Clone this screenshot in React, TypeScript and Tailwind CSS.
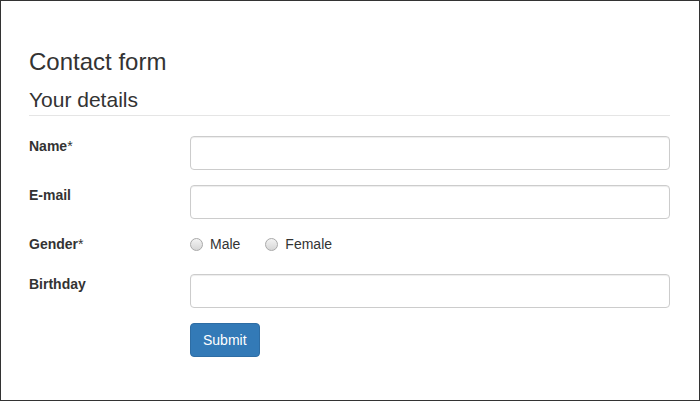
import React from "react";

function Field({ label, required }: { label: string; required?: boolean }) {
  return (
    <div className="flex items-start mb-[15px]">
      <label className="w-[161px] shrink-0 text-[14px] leading-[20px] font-bold">
        {label}
        {required && <span className="font-normal">*</span>}
      </label>
      <input
        type="text"
        className="w-[480px] h-[34px] border border-[#ccc] rounded-[4px] px-3 shadow-[inset_0_1px_1px_rgba(0,0,0,0.075)] outline-none"
      />
    </div>
  );
}

function Radio({ label }: { label: string }) {
  return (
    <label className="flex items-center gap-[7px] mr-[25px]">
      <span className="w-[13px] h-[13px] rounded-full border border-[#a9a9a9] bg-gradient-to-b from-[#f3f3f3] to-[#d6d6d6]" />
      <span>{label}</span>
    </label>
  );
}

export default function App() {
  return (
    <div className="w-[700px] h-[401px] border border-[#333] bg-white text-[#333] font-['Liberation_Sans',Arial,sans-serif] pl-[28px] pr-[29px] pt-[48px]">
      <h3 className="text-[24px] leading-[26.4px] mb-[10px]">Contact form</h3>
      <form onSubmit={e => e.preventDefault()}>
        <div className="text-[21px] leading-[30px] border-b border-[#e5e5e5] mb-[20px]">
          Your details
        </div>

        <Field label="Name" required />
        <Field label="E-mail" />

        {/* gender */}
        <div className="flex items-start h-[25px] mb-[15px]">
          <label className="w-[161px] shrink-0 text-[14px] leading-[20px] font-bold">
            Gender<span className="font-normal">*</span>
          </label>
          <div className="flex items-center text-[14px] leading-[20px]">
            <Radio label="Male" />
            <Radio label="Female" />
          </div>
        </div>

        <Field label="Birthday" />

        <div className="flex">
          <div className="w-[161px] shrink-0" />
          <button
            type="submit"
            className="h-[34px] px-3 text-[14px] text-white bg-[#337ab7] border border-[#2e6da4] rounded-[4px]"
          >
            Submit
          </button>
        </div>
      </form>
    </div>
  );
}
